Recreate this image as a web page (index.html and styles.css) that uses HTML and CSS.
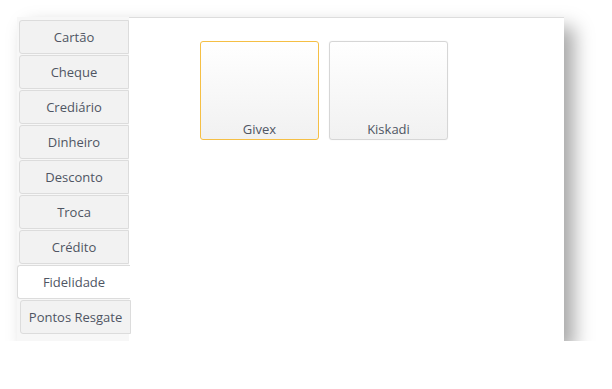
FILE: index.html
```html
<!DOCTYPE html>
<html lang="pt">
<head>
    <meta charset="UTF-8">
    <title>Formas de pagamento</title>
    <link rel="stylesheet" href="styles.css">
</head>
<body>
<div class="frame">
    <ul class="tabs">
        <li class="tab">Cartão</li>
        <li class="tab">Cheque</li>
        <li class="tab">Crediário</li>
        <li class="tab">Dinheiro</li>
        <li class="tab">Desconto</li>
        <li class="tab">Troca</li>
        <li class="tab">Crédito</li>
        <li class="tab active">Fidelidade</li>
        <li class="tab wide">Pontos Resgate</li>
    </ul>
    <div class="content">
        <div class="card selected">Givex</div>
        <div class="card">Kiskadi</div>
    </div>
</div>
</body>
</html>
```

FILE: styles.css
```css
* {
    margin: 0;
    padding: 0;
    box-sizing: border-box;
}

body {
    background: #ffffff;
    font-family: "Open Sans", "Noto Sans", sans-serif;
    font-size: 13px;
    color: #4f5563;
}

.frame {
    display: flex;
    margin: 17px 0 0 17px;
    width: 547px;
    height: 324px;
    background: #f7f7f7;
    box-shadow: 10px 10px 18px rgba(0, 0, 0, 0.35);
}

/* coluna de abas */
.tabs {
    list-style: none;
    width: 112px;
    padding-top: 3px;
    position: relative;
    z-index: 1;
}

.tab {
    height: 34px;
    line-height: 32px;
    margin: 0 0 1px 2px;
    width: 110px;
    text-align: center;
    white-space: nowrap;
    background: #f2f2f2;
    border: 1px solid #dcdcdc;
    border-radius: 3px 0 0 3px;
}

.tab.active {
    margin-left: 0;
    width: 113px;
    background: #ffffff;
    border-right: none;
}

.tab.wide {
    margin-left: 3px;
    width: 111px;
    padding: 0 4px;
}

/* area das bandeiras */
.content {
    flex: 1;
    display: flex;
    align-items: flex-start;
    gap: 10px;
    padding: 23px 0 0 71px;
    background: #ffffff;
    border-top: 1px solid #dddddd;
}

.card {
    width: 119px;
    height: 99px;
    display: flex;
    align-items: flex-end;
    justify-content: center;
    line-height: 18px;
    padding-bottom: 1px;
    background: linear-gradient(#ffffff, #f1f1f1);
    border: 1px solid #d6d6d6;
    border-radius: 3px;
    box-shadow: 0 0 1px rgba(0, 0, 0, 0.15);
}

.card.selected {
    border-color: #f5bf45;
    box-shadow: none;
}
```
